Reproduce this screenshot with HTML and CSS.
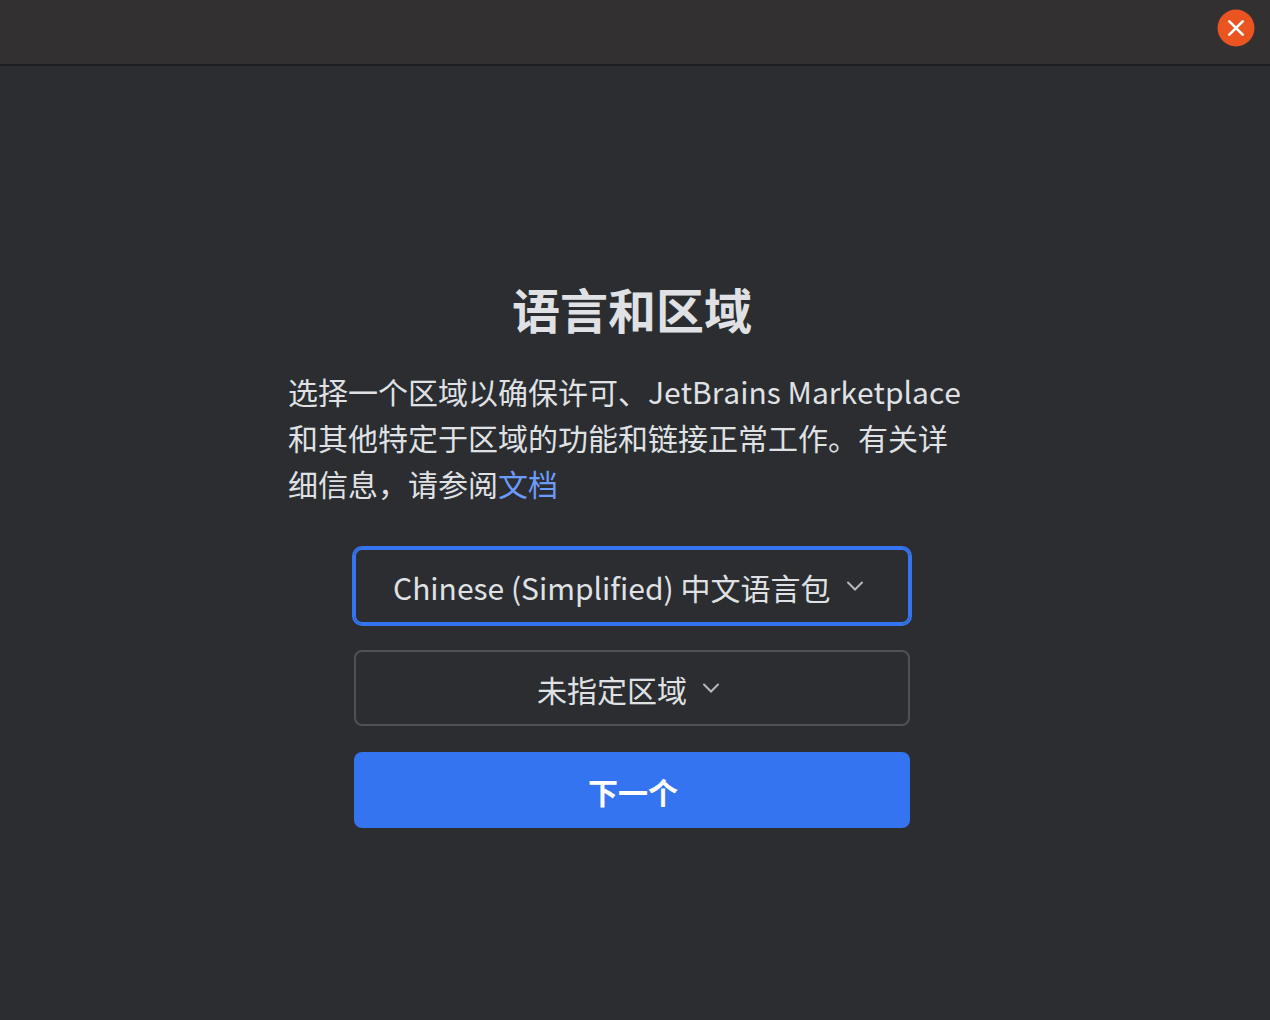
FILE: index.html
```html
<!DOCTYPE html>
<html lang="zh-CN">
<head>
<meta charset="utf-8">
<meta name="viewport" content="width=device-width, initial-scale=1">
<title>语言和区域</title>
<link rel="stylesheet" href="styles.css">
</head>
<body>
<header class="titlebar">
  <button class="close" type="button" aria-label="关闭">
    <svg viewBox="0 0 38 38" width="38" height="38" aria-hidden="true">
      <circle cx="19" cy="19" r="18.5" fill="#e95420"/>
      <path d="M12.3 12.3l13.4 13.4M25.7 12.3L12.3 25.7" stroke="#fff" stroke-width="2.6" stroke-linecap="round" fill="none"/>
    </svg>
  </button>
</header>
<main class="content">
  <h1 class="title">语言和区域</h1>
  <p class="intro">选择一个区域以确保许可、JetBrains Marketplace 和其他特定于区域的功能和链接正常工作。有关详细信息，请参阅<a class="link" href="#docs">文档</a></p>
  <form class="form">
    <div class="picker picker-active">
      <select class="select" aria-label="语言">
        <option>Chinese (Simplified) 中文语言包</option>
      </select>
      <svg class="chevron" viewBox="0 0 16 10" width="16" height="10" aria-hidden="true"><path d="M1 1.5l7 7 7-7"/></svg>
    </div>
    <div class="picker">
      <select class="select" aria-label="区域">
        <option>未指定区域</option>
      </select>
      <svg class="chevron" viewBox="0 0 16 10" width="16" height="10" aria-hidden="true"><path d="M1 1.5l7 7 7-7"/></svg>
    </div>
    <button class="next" type="button">下一个</button>
  </form>
</main>
</body>
</html>
```
FILE: styles.css
```css
* {
  box-sizing: border-box;
}

body {
  margin: 0;
  min-height: 100vh;
  display: flex;
  flex-direction: column;
  background: #2b2d30;
  color: #dfe1e5;
  font-family: "Noto Sans CJK SC", sans-serif;
  font-size: 30px;
  line-height: 46px;
  font-kerning: none;
}

.titlebar {
  display: flex;
  justify-content: flex-end;
  padding: 9px 15px 17px;
  background: #333031;
  border-bottom: 2px solid #1e1f22;
}

.close {
  padding: 0;
  border: 0;
  background: none;
  border-radius: 50%;
  line-height: 0;
}

.content {
  flex: 1;
  display: flex;
  flex-direction: column;
  align-items: center;
  justify-content: center;
  padding: 18px 30px 4px 24px;
}

.title {
  margin: 0 0 24px;
  font-size: 48px;
  line-height: 72px;
}

.intro {
  width: 100%;
  max-width: 688px;
  margin: 0 0 42px;
}

.link {
  color: #6b9bfa;
  text-decoration: none;
}

.form {
  width: 100%;
  max-width: 556px;
  display: grid;
  gap: 26px;
}

.picker {
  display: flex;
  align-items: center;
  justify-content: center;
  gap: 16px;
  height: 76px;
  padding-right: 8px;
  border: 2px solid #4e5157;
  border-radius: 8px;
}

.picker-active {
  border-color: #3574f0;
  box-shadow: 0 0 0 2px #3574f0;
}

.select {
  appearance: none;
  border: 0;
  padding: 2px 0 0;
  outline: 0;
  background: none;
  color: inherit;
  font: inherit;
  font-kerning: none;
}

.chevron {
  fill: none;
  stroke: #b4b8bf;
  stroke-width: 2;
  stroke-linecap: round;
}

.next {
  height: 76px;
  padding: 2px 0 0 2px;
  border: 0;
  border-radius: 8px;
  background: #3574f0;
  color: #fff;
  font: inherit;
  font-weight: 700;
}
```
